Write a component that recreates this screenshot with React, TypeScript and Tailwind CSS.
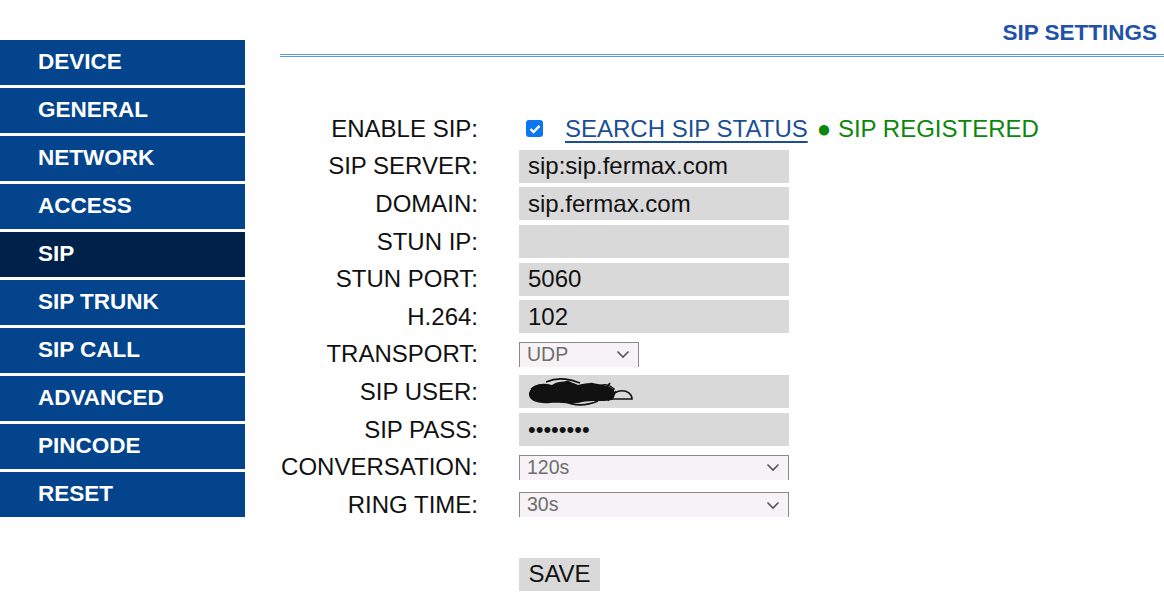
import React from "react";

const menu = ["DEVICE", "GENERAL", "NETWORK", "ACCESS", "SIP", "SIP TRUNK", "SIP CALL", "ADVANCED", "PINCODE", "RESET"];

function Chevron() {
  return (
    <svg width="14" height="9" viewBox="0 0 14 9" className="shrink-0">
      <path d="M1.5 1.5 L7 7 L12.5 1.5" fill="none" stroke="#555" strokeWidth="1.6" />
    </svg>
  );
}

function FakeSelect({ value, width }: { value: string; width: string }) {
  return (
    <div className={`${width} h-[25px] flex items-center justify-between border-l border-t border-r border-[#8a8a8a] bg-[#f6f2f5] pl-[7px] pr-[8px] text-[19.5px] leading-none text-[#6e6e6e]`}>
      <span>{value}</span>
      <Chevron />
    </div>
  );
}

function TextBox({ children }: { children?: React.ReactNode }) {
  return (
    <div className="w-[270px] h-[33px] bg-[#d9d9d9] flex items-center pl-[9px] text-[24px] leading-none text-[#111]">
      {children}
    </div>
  );
}

function Scribble() {
  return (
    <svg width="110" height="30" viewBox="0 0 110 30" className="-ml-[2px]">
      <path d="M3 16 C6 7, 16 5, 26 8 C34 3, 44 4, 52 8 C62 5, 72 6, 84 10 C89 13, 91 18, 86 23 C76 25, 66 23, 56 25 C46 28, 34 25, 24 26 C12 27, 2 24, 3 16 Z" fill="#111" />
      <path d="M5 12 C16 2, 28 18, 38 6 C46 -1, 52 22, 62 8 C70 1, 74 22, 84 6 M6 22 C20 14, 30 28, 44 18 C54 12, 64 28, 76 16 C82 12, 86 22, 90 14 M20 5 C34 -1, 46 3, 54 6 M38 24 C48 29, 60 29, 72 24 M30 9 C40 14, 48 4, 60 12 M72 10 C78 6, 84 8, 88 12 L82 24" fill="none" stroke="#111" strokeWidth="1.6" />
      <path d="M86 22 C86 11, 106 11, 106 22 Z" fill="none" stroke="#111" strokeWidth="1.6" />
    </svg>
  );
}

function Row({ label, children }: { label: string; children: React.ReactNode }) {
  return (
    <div className="flex items-center h-[37.6px]">
      <div className="w-[198px] text-right text-[24px] leading-none text-[#111] whitespace-nowrap">{label}</div>
      <div className="ml-[41px] flex items-center">{children}</div>
    </div>
  );
}

export default function App() {
  return (
    <div className="w-[1164px] h-[613px] bg-white flex overflow-hidden" style={{ fontFamily: '"Liberation Sans", Arial, sans-serif' }}>
      <div className="w-[245px] mt-[40px] flex flex-col gap-[3px] shrink-0">
        {menu.map((m) => (
          <div key={m} className={`h-[45px] flex items-center pl-[38px] text-white font-bold text-[22.5px] leading-none ${m === "SIP" ? "bg-[#00214a]" : "bg-[#03448c]"}`}>
            {m}
          </div>
        ))}
      </div>
      <div className="ml-[35px] flex-1 flex flex-col">
        <div className="pt-[20px] pr-[7px] text-right text-[22.5px] leading-[26px] font-bold text-[#2151a8]">SIP SETTINGS</div>
        <div className="mt-[8px] h-[3px] border-t border-b border-[#5b9bd6]" />
        <div className="mt-[53px] flex flex-col">
          <Row label="ENABLE SIP:">
            <div className="ml-[7px] w-[17px] h-[17px] shrink-0 rounded-[3px] bg-[#0b75f2] flex items-center justify-center">
              <svg width="12" height="10" viewBox="0 0 12 10">
                <path d="M1.5 5 L4.5 8 L10.5 1.8" fill="none" stroke="white" strokeWidth="2.4" />
              </svg>
            </div>
            <span className="ml-[22px] text-[24px] leading-none text-[#1a4f94] underline underline-offset-[4px]">SEARCH SIP STATUS</span>
            <span className="ml-[9px] text-[24px] leading-none text-[#0b870b]">● SIP REGISTERED</span>
          </Row>
          <Row label="SIP SERVER:"><TextBox>sip:sip.fermax.com</TextBox></Row>
          <Row label="DOMAIN:"><TextBox>sip.fermax.com</TextBox></Row>
          <Row label="STUN IP:"><TextBox /></Row>
          <Row label="STUN PORT:"><TextBox>5060</TextBox></Row>
          <Row label="H.264:"><TextBox>102</TextBox></Row>
          <Row label="TRANSPORT:"><FakeSelect value="UDP" width="w-[120px]" /></Row>
          <Row label="SIP USER:"><TextBox><Scribble /></TextBox></Row>
          <Row label="SIP PASS:"><TextBox><span className="text-[22px] tracking-[0px]">••••••••</span></TextBox></Row>
          <Row label="CONVERSATION:"><FakeSelect value="120s" width="w-[270px]" /></Row>
          <Row label="RING TIME:"><FakeSelect value="30s" width="w-[270px]" /></Row>
        </div>
        <div className="mt-[34px] ml-[239px]">
          <div className="w-[81px] h-[33px] bg-[#d9d9d9] flex items-center justify-center text-[24px] leading-none text-[#111]">SAVE</div>
        </div>
      </div>
    </div>
  );
}
